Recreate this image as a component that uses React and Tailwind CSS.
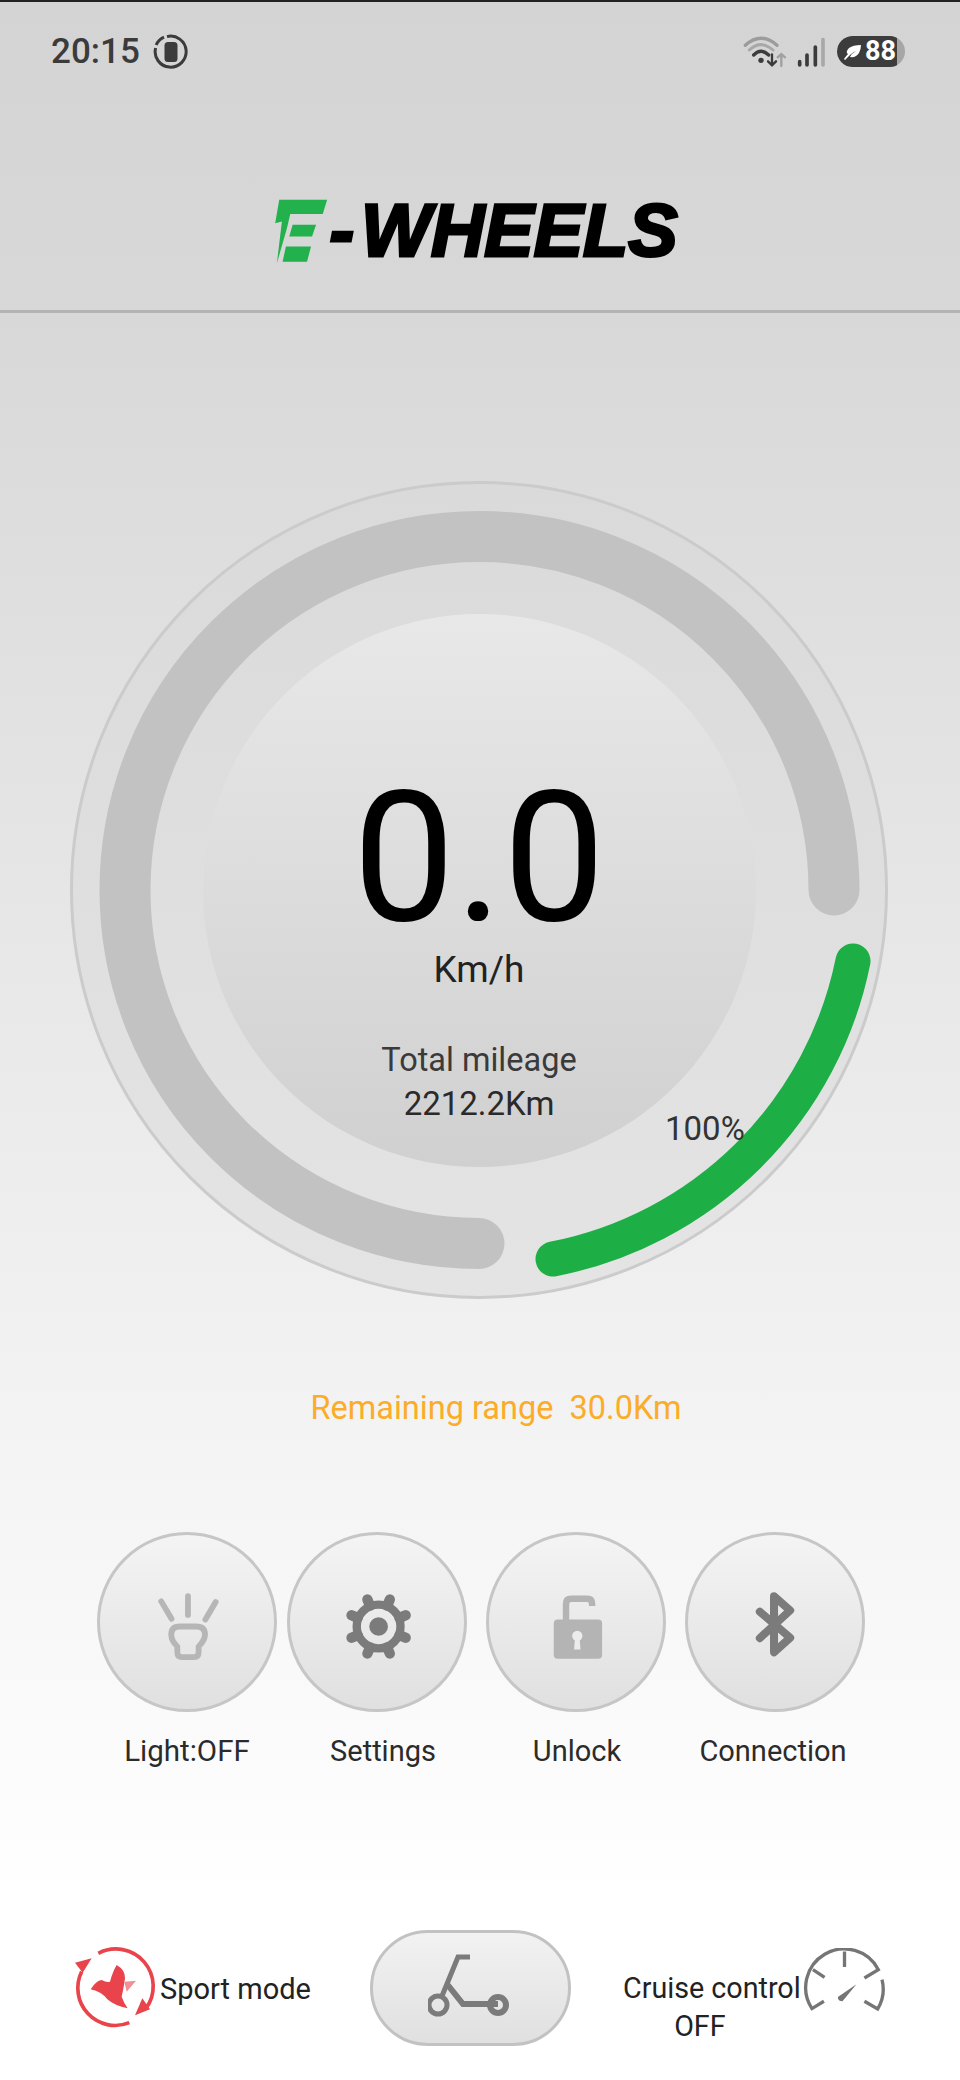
const GEAR_ANGLES = [22.5, 67.5, 112.5, 157.5, 202.5, 247.5, 292.5, 337.5];

const ButtonIcon = ({ children, viewBox }) => (
	<svg viewBox={viewBox} className="w-full h-full" fill="none" strokeLinecap="round" strokeLinejoin="round">
		{children}
	</svg>
);

const actions = [
	{
		label: "Light:OFF",
		labelClass: "text-[29.5px]",
		viewBox: "52 66 540 540",
		icon: (
			<g stroke="#b6b6b6" strokeWidth="18">
				<path d="M242 272 L274 326 M325 256 L325 314 M411 274 L379 328" />
				<path d="M300 350 H350 Q378 350 378 376 Q376 395 358 412 V430 Q358 445 344 445 H306 Q292 445 292 430 V412 Q274 395 273 376 Q273 350 300 350 Z" />
			</g>
		),
	},
	{
		label: "Settings",
		labelClass: "text-[29px] translate-x-[6px]",
		viewBox: "622 66 540 540",
		icon: (
			<g>
				{GEAR_ANGLES.map((a) => {
					const r = (a * Math.PI) / 180;
					return (
						<line
							key={a}
							x1={897 + 70 * Math.cos(r)}
							y1={350 + 70 * Math.sin(r)}
							x2={897 + 91 * Math.cos(r)}
							y2={350 + 91 * Math.sin(r)}
							stroke="#7b7b7b"
							strokeWidth="32"
						/>
					);
				})}
				<circle cx="897" cy="350" r="68" stroke="#7b7b7b" strokeWidth="26" />
				<circle cx="897" cy="350" r="29" fill="#7b7b7b" />
			</g>
		),
	},
	{
		label: "Unlock",
		labelClass: "text-[29px] translate-x-[1px]",
		viewBox: "47 66 540 540",
		icon: (
			<g>
				<path d="M286 335 V280 Q286 264 302 264 H352 Q367 264 367 280 V286" stroke="#b4b4b4" strokeWidth="20" strokeLinecap="butt" />
				<rect x="248" y="328" width="150" height="122" rx="12" fill="#b4b4b4" />
				<circle cx="321" cy="379" r="16" fill="#ececec" />
				<path d="M314 385 H328 L331 421 H311 Z" fill="#ececec" />
			</g>
		),
	},
	{
		label: "Connection",
		labelClass: "text-[29px] -translate-x-[2px]",
		viewBox: "645 66 540 540",
		icon: (
			<path
				d="M868 304 L962 385 L912 430 V256 L962 300 L868 386"
				stroke="#7b7b7b"
				strokeWidth="25"
			/>
		),
	},
];

const StatusBar = () => (
	<div className="flex items-center justify-between h-[100px] pl-[51px] pr-[55px] pb-[1px]">
		<div className="flex items-center gap-[13px]">
			<span className="text-[35px] font-medium text-[#3b3b3b] leading-none">20:15</span>
			<svg viewBox="0 0 36 36" className="w-[36px] h-[36px]" fill="none">
				<path d="M14 2.6 A15.5 15.5 0 1 1 2.6 14" stroke="#3b3b3b" strokeWidth="3" />
				<path d="M3.2 11 A15.5 15.5 0 0 1 11 3.2" stroke="#3b3b3b" strokeWidth="3" />
				<rect x="11.5" y="8" width="13" height="20" rx="3.5" fill="#3b3b3b" />
			</svg>
		</div>
		<div className="flex items-center gap-[10px]">
			<svg viewBox="78 40 132 96" className="w-[44px] h-[32px]" fill="none" strokeLinecap="round">
				<path d="M85 68 Q132 26 180 68" stroke="#9c9c9c" strokeWidth="10" />
				<path d="M97 82 Q132 50 168 82" stroke="#a8a8a8" strokeWidth="9" />
				<path d="M110 97 Q132 75 155 97" stroke="#3b3b3b" strokeWidth="10" />
				<circle cx="132" cy="113" r="8" fill="#3b3b3b" />
				<path d="M165 95 V128 M153 116 L165 128 L177 116" stroke="#3b3b3b" strokeWidth="7" />
				<path d="M193 130 V94 M182 104 L193 94 L204 104" stroke="#a0a0a0" strokeWidth="7" />
			</svg>
			<svg viewBox="235 42 90 90" className="w-[30px] h-[30px]" fill="none" strokeLinecap="round" strokeWidth="11">
				<path d="M243 116 V126 M265 96 V126 M290 72 V126" stroke="#3b3b3b" />
				<path d="M313 50 V126" stroke="#a8a8a8" />
			</svg>
			<div className="flex items-center w-[68px] h-[31px] rounded-full bg-[#a6a6a6] overflow-hidden">
				<div className="flex items-center justify-end gap-[2px] w-[60px] h-full bg-[#3c3c3c] rounded-l-full rounded-r-[6px] pr-[1px]">
					<svg viewBox="0 0 20 20" className="w-[20px] h-[20px]">
						<path d="M2 18 Q5 15 7 13 Q10 10 13 9 Q9 11 7 15 Q13 16 16 11 Q18 7 18 3 Q10 3 6 6 Q2 10 5 12 Q3 14 1 17 Z" fill="#ffffff" />
					</svg>
					<span className="text-[27px] font-bold text-white leading-none">88</span>
				</div>
			</div>
		</div>
	</div>
);

const Logo = () => (
	<div className="flex items-start justify-center h-[211px] pt-[92px] border-b-[3px] border-[#b3b3b3]">
		<div className="flex items-center -translate-x-[4px]">
			<svg viewBox="70 50 160 200" className="w-[54px] h-[67px] mr-[1px]">
				<path d="M85 55 H228 L215 98 H118 L108 140 L78 245 L93 120 L73 125 Z" fill="#22b14c" />
				<path d="M125 130 H195 L183 165 H115 Z" fill="#22b14c" />
				<path d="M105 195 H180 L168 240 H95 Z" fill="#22b14c" />
			</svg>
			<span className="text-[74px] font-bold italic text-black leading-none font-['Liberation_Sans',sans-serif] [-webkit-text-stroke:3px_#000]">
				<span className="tracking-[7px]">-</span>WHEELS
			</span>
		</div>
	</div>
);

const Gauge = () => (
	<div className="relative ml-[70px] w-[818px] h-[818px] rounded-full border-[3px] border-[#cbcbcb] bg-gradient-to-b from-[#dadada] to-[#e4e4e4] flex items-center justify-center">
		<svg viewBox="0 0 818 818" className="absolute -left-[3px] -top-[3px] w-[818px] h-[818px]" fill="none" strokeLinecap="round">
			<path d="M409 762.5 A354.5 353.5 0 1 1 764 409" stroke="#c2c2c2" strokeWidth="51" />
			<path d="M783 480 A380 380 0 0 1 483 778" stroke="#1dae45" strokeWidth="35" />
		</svg>
		<div className="relative w-[553px] h-[553px] rounded-full bg-gradient-to-b from-[#e8e8e8] to-[#d0d0d0] flex flex-col items-center pt-[169px]">
			<span className="text-[182px] text-black leading-[150px]">0.0</span>
			<span className="text-[37px] text-[#222] leading-[40px] mt-[17px]">Km/h</span>
			<span className="text-[32.5px] text-[#3a3a3a] leading-[40px] mt-[50px]">Total mileage</span>
			<span className="text-[33px] text-[#2a2a2a] leading-[40px] mt-[4px]">2212.2Km</span>
		</div>
		<span className="absolute left-[592px] top-[625px] text-[33px] text-[#333] leading-[40px]">100%</span>
	</div>
);

const ActionButton = ({ action }) => (
	<div className="flex flex-col items-center w-[180px]">
		<div className="w-[180px] h-[180px] rounded-full border-[3px] border-[#c6c6c6] bg-gradient-to-b from-[#f4f4f4] to-[#e0e0e0]">
			<ButtonIcon viewBox={action.viewBox}>{action.icon}</ButtonIcon>
		</div>
		<span className={`mt-[19px] text-[#2b2b2b] leading-[40px] whitespace-nowrap ${action.labelClass}`}>
			{action.label}
		</span>
	</div>
);

const BottomBar = () => (
	<div className="relative h-[150px] mt-auto">
		<div className="absolute left-[70px] top-[10px] flex items-center">
			<svg viewBox="0 0 270 270" className="w-[90px] h-[90px]" fill="none">
				<path d="M85 40 A112 112 0 0 1 228 205" stroke="#e9434b" strokeWidth="11" />
				<path d="M178 248 A112 112 0 0 1 35 95" stroke="#e9434b" strokeWidth="11" />
				<path d="M15 68 L65 55 L38 98 Z" fill="#e9434b" />
				<path d="M240 208 L195 226 L217 175 Z" fill="#e9434b" />
				<path d="M62 148 Q78 122 95 120 Q110 128 120 125 Q128 95 140 75 Q166 90 165 115 Q160 150 155 170 Q162 190 173 205 Q135 198 112 178 Q95 155 62 148 Z" fill="#e9434b" />
				<path d="M163 125 L198 122 L170 155 Z" fill="#f09095" />
			</svg>
			<span className="text-[29px] text-[#222] leading-[40px] mt-[7px]">Sport mode</span>
		</div>
		<div className="absolute left-[370px] top-0 w-[201px] h-[116px] rounded-full border-[3px] border-[#c2c2c2] bg-gradient-to-b from-[#f2f2f2] to-[#e0e0e0] flex items-center justify-center">
			<svg viewBox="428 1953 85 70" className="w-[85px] h-[70px]" fill="none" stroke="#7b7b7b">
				<path d="M470 1957 H458 L442 1996" strokeWidth="5" />
				<path d="M447 1984 L463 2004 H498" strokeWidth="6" />
				<circle cx="438" cy="2005" r="9" strokeWidth="5" />
				<circle cx="498" cy="2005" r="8" strokeWidth="6" />
			</svg>
		</div>
		<div className="absolute left-[623px] top-[39px] flex flex-col items-center text-[28.7px] text-[#222] leading-[38px]">
			<span className="whitespace-nowrap">Cruise control</span>
			<span className="-translate-x-[12px]">OFF</span>
		</div>
		<svg viewBox="970 145 250 195" className="absolute left-[803px] top-[18px] w-[83px] h-[65px]" fill="none" stroke="#757575" strokeWidth="10">
			<path d="M1033 305 L997 327 A116 116 0 1 1 1197 210 L1155 235" />
			<path d="M1208 240 A116 116 0 0 1 1195 328 L1155 305" />
			<path d="M1095 155 V202 M1000 210 L1035 233" />
			<path d="M1131 254 L1089 305 Q1075 305 1075 292 Z" fill="#757575" stroke="none" />
		</svg>
	</div>
);

export default function App() {
	return (
		<div className="w-[960px] h-[2080px] flex flex-col overflow-hidden font-['Roboto',sans-serif] bg-gradient-to-b from-[#d4d4d4] via-[#d8d8d8] via-15% to-[#ffffff] to-92% border-t-2 border-[#222]">
			<StatusBar />
			<Logo />
			<div className="pt-[168px]">
				<Gauge />
			</div>
			<p className="mt-[89px] text-center text-[32.5px] text-[#fbac28] leading-[40px] translate-x-[16px]">
				Remaining range&nbsp; 30.0Km
			</p>
			<div className="flex mt-[104px] pl-[97px]">
				<ActionButton action={actions[0]} />
				<div className="ml-[10px]">
					<ActionButton action={actions[1]} />
				</div>
				<div className="ml-[19px]">
					<ActionButton action={actions[2]} />
				</div>
				<div className="ml-[19px]">
					<ActionButton action={actions[3]} />
				</div>
			</div>
			<BottomBar />
		</div>
	);
}
